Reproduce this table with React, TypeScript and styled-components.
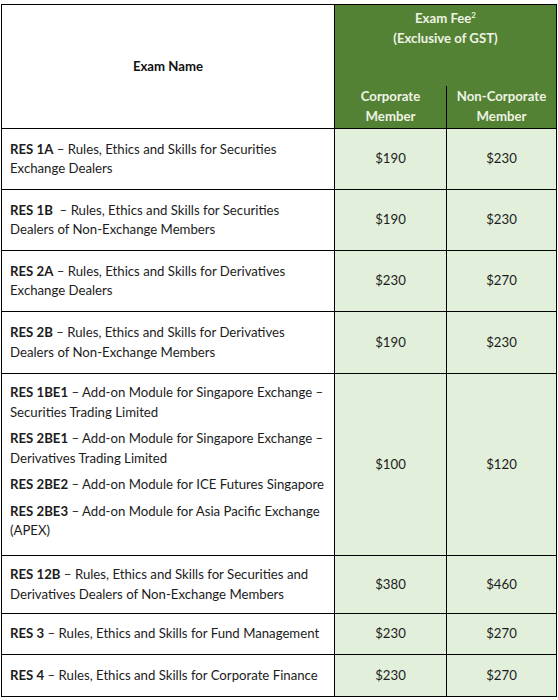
import React from "react";
import styled, { createGlobalStyle } from "styled-components";

const Global = createGlobalStyle`
  html, body { margin: 0; padding: 0; background: #ffffff; }
  body { font-family: Lato, "Open Sans", "Liberation Sans", sans-serif; color: #1c1c1c; }
`;

const Page = styled.div`
  padding: 4px 0 0 1px;
`;

const Table = styled.table`
  border-collapse: collapse;
  table-layout: fixed;
  width: 555px;
  font-size: 13.2px;
  line-height: 19.5px;
`;

const Row = styled.tr<{ $h: number }>`
  height: ${(p) => p.$h}px;
`;

const HeadName = styled.th`
  border: 1px solid #000;
  background: #ffffff;
  font-weight: 700;
  color: #111;
  text-align: center;
  vertical-align: middle;
  padding: 0;
`;

const HeadFee = styled.th<{ $top?: boolean }>`
  background: #548235;
  color: #eef3e4;
  font-weight: 700;
  text-align: center;
  vertical-align: ${(p) => (p.$top ? "top" : "middle")};
  padding: ${(p) => (p.$top ? "4px 0 0" : "0")};
  border-left: 1px solid #000;
  border-right: 1px solid #000;
  border-top: ${(p) => (p.$top ? "1px solid #000" : "none")};
  border-bottom: ${(p) => (p.$top ? "none" : "1px solid #000")};
`;

const Sup = styled.sup`
  font-size: 8px;
  line-height: 0;
  vertical-align: 5px;
`;

const NameCell = styled.td<{ $noBottom?: boolean; $top?: boolean }>`
  border-left: 1px solid #000;
  border-right: 1px solid #000;
  border-top: 1px solid #000;
  border-bottom: ${(p) => (p.$noBottom ? "none" : "1px solid #000")};
  padding: ${(p) => (p.$top ? "9px 3px 0 8px" : "0 3px 0 8px")};
  vertical-align: ${(p) => (p.$top ? "top" : "middle")};
  text-align: left;
`;

const FeeCell = styled.td<{ $noBottom?: boolean }>`
  background: #e2efda;
  border-left: 1px solid #000;
  border-right: 1px solid #000;
  border-top: 1px solid #000;
  border-bottom: ${(p) => (p.$noBottom ? "none" : "1px solid #000")};
  text-align: center;
  vertical-align: middle;
  padding: 0;
`;

const Code = styled.b`
  font-weight: 700;
`;

const Para = styled.p`
  margin: 0 0 7px;
`;

type Item = { code: string; title: string; rest?: string; spacer?: boolean };

const rows: { items: Item[]; corp: string; non: string; h: number; noBottom?: boolean; top?: boolean }[] = [
  { items: [{ code: "RES 1A", title: "Rules, Ethics and Skills for Securities Exchange Dealers" }], corp: "$190", non: "$230", h: 61 },
  {
    items: [{ code: "RES 1B", title: "Rules, Ethics and Skills for Securities", rest: "Dealers of Non-Exchange Members", spacer: true }],
    corp: "$190",
    non: "$230",
    h: 61,
  },
  { items: [{ code: "RES 2A", title: "Rules, Ethics and Skills for Derivatives Exchange Dealers" }], corp: "$230", non: "$270", h: 61 },
  { items: [{ code: "RES 2B", title: "Rules, Ethics and Skills for Derivatives Dealers of Non-Exchange Members" }], corp: "$190", non: "$230", h: 62 },
  {
    items: [
      { code: "RES 1BE1", title: "Add-on Module for Singapore Exchange – Securities Trading Limited" },
      { code: "RES 2BE1", title: "Add-on Module for Singapore Exchange – Derivatives Trading Limited" },
      { code: "RES 2BE2", title: "Add-on Module for ICE Futures Singapore" },
      { code: "RES 2BE3", title: "Add-on Module for Asia Pacific Exchange (APEX)" },
    ],
    corp: "$100",
    non: "$120",
    h: 182,
    top: true,
  },
  { items: [{ code: "RES 12B", title: "Rules, Ethics and Skills for Securities and Derivatives Dealers of Non-Exchange Members" }], corp: "$380", non: "$460", h: 58 },
  { items: [{ code: "RES 3", title: "Rules, Ethics and Skills for Fund Management" }], corp: "$230", non: "$270", h: 41, noBottom: true },
  { items: [{ code: "RES 4", title: "Rules, Ethics and Skills for Corporate Finance" }], corp: "$230", non: "$270", h: 42 },
];

export default function App() {
  return (
    <Page>
      <Global />
      <Table>
        <colgroup>
          <col style={{ width: 333 }} />
          <col style={{ width: 112 }} />
          <col style={{ width: 110 }} />
        </colgroup>
        <thead>
          <Row $h={81}>
            <HeadName rowSpan={2}>Exam Name</HeadName>
            <HeadFee colSpan={2} $top>
              Exam Fee<Sup>2</Sup>
              <br />
              (Exclusive of GST)
            </HeadFee>
          </Row>
          <Row $h={43}>
            <HeadFee>
              Corporate
              <br />
              Member
            </HeadFee>
            <HeadFee>
              Non-Corporate
              <br />
              Member
            </HeadFee>
          </Row>
        </thead>
        <tbody>
          {rows.map((r, i) => (
            <Row key={i} $h={r.h}>
              <NameCell $noBottom={r.noBottom} $top={r.top}>
                {r.items.length > 1
                  ? r.items.map((it) => (
                      <Para key={it.code}>
                        <Code>{it.code}</Code> – {it.title}
                      </Para>
                    ))
                  : r.items.map((it) => (
                      <span key={it.code}>
                        <Code>{it.code}</Code>
                        {it.spacer ? "\u00a0 – " : " – "}
                        {it.title}
                        {it.rest ? (
                          <>
                            <br />
                            {it.rest}
                          </>
                        ) : null}
                      </span>
                    ))}
              </NameCell>
              <FeeCell $noBottom={r.noBottom}>{r.corp}</FeeCell>
              <FeeCell $noBottom={r.noBottom}>{r.non}</FeeCell>
            </Row>
          ))}
        </tbody>
      </Table>
    </Page>
  );
}
